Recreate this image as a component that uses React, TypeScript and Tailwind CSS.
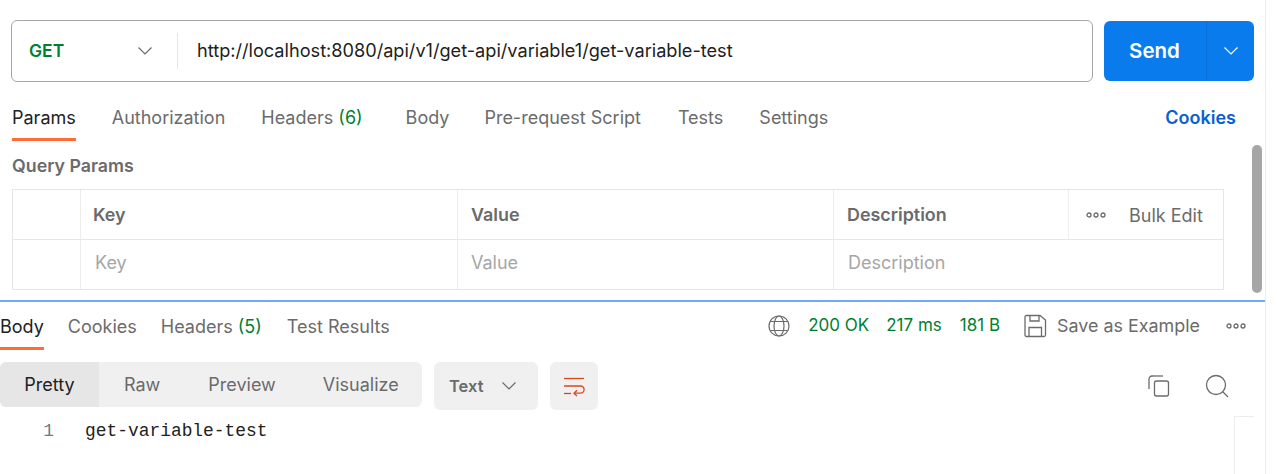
import React from "react";

const Chevron = ({ className = "" }: { className?: string }) => (
  <svg className={className} width="16" height="16" viewBox="0 0 16 16" fill="none" stroke="currentColor" strokeWidth="1.2">
    <path d="M1.5 4.5 L8 11 L14.5 4.5" />
  </svg>
);

const Dots = ({ className = "" }: { className?: string }) => (
  <svg className={className} width="20" height="6" viewBox="0 0 20 6" fill="none" stroke="currentColor" strokeWidth="1.3">
    <circle cx="3" cy="3" r="2" />
    <circle cx="10" cy="3" r="2" />
    <circle cx="17" cy="3" r="2" />
  </svg>
);

const Tab = ({ children, active, className = "" }: { children: React.ReactNode; active?: boolean; className?: string }) => (
  <div className={`flex items-center border-b-[3px] ${active ? "border-[#ff6c37] text-[#212121]" : "border-transparent text-[#6b6b6b]"} ${className}`}>
    {children}
  </div>
);

export default function App() {
  return (
    <div className="w-[1277px] h-[474px] overflow-hidden bg-white flex font-['Inter',sans-serif] text-[18px]">
      <div className="w-[1266px] h-full flex flex-col border-r border-[#ededed]">
        <section className="relative h-[300px] shrink-0 pl-[11px] pr-[12px] pt-[20px]">
          <div className="flex gap-[11px] items-center">
            <div className="w-[1082px] shrink-0 h-[62px] border border-[#a6a6a6] rounded-[6px] flex items-center">
              <div className="w-[166px] h-[36px] flex items-center pl-[17px] border-r border-[#e6e6e6] shrink-0">
                <span className="w-[108px] text-[#007f31] font-semibold text-[17.5px]">GET</span>
                <Chevron className="text-[#6b6b6b]" />
              </div>
              <div className="pl-[19px] text-[#212121] text-[18.15px]">http://localhost:8080/api/v1/get-api/variable1/get-variable-test</div>
            </div>
            <div className="w-[150px] shrink-0 h-[60px] rounded-[6px] bg-[#097bed] flex text-white">
              <div className="w-[103px] pr-px flex items-center justify-center border-r border-[#0a6fd4] font-semibold text-[20.5px]">Send</div>
              <div className="flex-1 flex items-center justify-center"><Chevron /></div>
            </div>
          </div>

          <div className="flex items-stretch pl-px h-[44px] mt-[15px] pr-[17px]">
            <Tab active>Params</Tab>
            <Tab className="ml-[36px]">Authorization</Tab>
            <Tab className="ml-[36px]">Headers&nbsp;<span className="text-[#007f31]">(6)</span></Tab>
            <Tab className="ml-[43px]">Body</Tab>
            <Tab className="ml-[35px]">Pre-request Script</Tab>
            <Tab className="ml-[37px]">Tests</Tab>
            <Tab className="ml-[36px]">Settings</Tab>
            <Tab className="ml-auto !text-[#0b5fd0] font-semibold">Cookies</Tab>
          </div>

          <div className="pl-px mt-[14px] h-[21px] leading-[21px] text-[#6b6b6b] font-semibold text-[17.8px]">Query Params</div>

          <div className="ml-px mt-[13px] w-[1212px] border border-[#e6e6e6]">
            <div className="grid grid-cols-[67px_377px_376px_235px_1fr] h-[50px] border-b border-[#e6e6e6]">
              <div />
              <div className="border-l border-[#ededed] pl-[12px] pt-px flex items-center font-semibold text-[17.9px] text-[#6b6b6b]">Key</div>
              <div className="border-l border-[#ededed] pl-[13px] pt-px flex items-center font-semibold text-[17.9px] text-[#6b6b6b]">Value</div>
              <div className="border-l border-[#ededed] pl-[13px] pt-px flex items-center font-semibold text-[17.9px] text-[#6b6b6b]">Description</div>
              <div className="border-l border-[#ededed] pl-[17px] pt-px flex items-center text-[#6b6b6b]">
                <Dots />
                <span className="ml-[23px]">Bulk Edit</span>
              </div>
            </div>
            <div className="grid grid-cols-[67px_377px_376px_1fr] h-[49px] text-[#a6a6a6]">
              <div />
              <div className="border-l border-[#ededed] pl-[14px] pb-[5px] flex items-center">Key</div>
              <div className="border-l border-[#ededed] pl-[13px] pb-[5px] flex items-center">Value</div>
              <div className="border-l border-[#ededed] pl-[14px] pb-[5px] flex items-center">Description</div>
            </div>
          </div>

          <div className="absolute left-[1252px] top-[145px] w-[10px] h-[148px] rounded-[5px] bg-[#a6a6a6]" />
        </section>

        <div className="h-[2px] bg-[#6eaaf1] shrink-0" />

        <section className="flex-1 relative">
          <div className="flex items-stretch h-[48px]">
            <Tab active className="pt-[3px]">Body</Tab>
            <Tab className="pt-[3px] ml-[24px]">Cookies</Tab>
            <Tab className="pt-[3px] ml-[24px]">Headers&nbsp;<span className="text-[#007f31]">(5)</span></Tab>
            <Tab className="pt-[3px] ml-[25px]">Test Results</Tab>
            <div className="ml-auto flex items-center h-[48px] pr-[19px] text-[#007f31] text-[17px]">
              <svg width="24" height="24" viewBox="0 0 24 24" fill="none" stroke="#6b6b6b" strokeWidth="1.2">
                <circle cx="12" cy="12" r="10" />
                <ellipse cx="12" cy="12" rx="5" ry="10" />
                <path d="M3.2 7.5 H20.8 M3.2 16.5 H20.8" />
              </svg>
              <span className="ml-[17px]">200 OK</span>
              <span className="ml-[17px]">217 ms</span>
              <span className="ml-[18px]">181 B</span>
              <svg className="ml-[24px]" width="23" height="24" viewBox="0 0 23 24" fill="none" stroke="#6b6b6b" strokeWidth="1.3">
                <path d="M1 3 a1.5 1.5 0 0 1 1.5 -1.5 H16 L21.5 6 V21 a1.5 1.5 0 0 1 -1.5 1.5 H2.5 A1.5 1.5 0 0 1 1 21 Z" />
                <path d="M6 1.5 V7 H15 V1.5" />
                <path d="M5 22.5 V13.5 H17.5 V22.5" />
              </svg>
              <span className="ml-[10px] text-[#6b6b6b] text-[17.9px]">Save as Example</span>
              <Dots className="ml-[26px] text-[#6b6b6b]" />
            </div>
          </div>

          <div className="flex items-start mt-[12px]">
            <div className="w-[422px] h-[45px] rounded-[6px] bg-[#f0f0f0] flex text-[#6b6b6b] overflow-hidden">
              <div className="w-[99px] bg-[#e6e6e6] text-[#212121] flex items-center justify-center">Pretty</div>
              <div className="ml-[25px] flex items-center">Raw</div>
              <div className="ml-[48px] flex items-center">Preview</div>
              <div className="ml-[47px] flex items-center">Visualize</div>
            </div>
            <div className="ml-[12px] w-[104px] h-[48px] rounded-[6px] bg-[#f0f0f0] flex items-center pl-[15px] text-[#6b6b6b] font-semibold text-[16.5px]">
              <span className="w-[52px]">Text</span>
              <Chevron />
            </div>
            <div className="ml-[12px] w-[48px] h-[48px] rounded-[6px] bg-[#f0f0f0] flex items-center justify-center">
              <svg width="24" height="24" viewBox="0 0 24 24" fill="none" stroke="#d9481c" strokeWidth="1.3">
                <path d="M2 4.5 H22" />
                <path d="M2 12 H18.5 a3.6 3.6 0 0 1 0 7.2 H12" />
                <path d="M15 16.3 L12 19.2 L15 22" />
                <path d="M2 19.5 H9" />
              </svg>
            </div>
            <div className="ml-auto flex items-center h-[48px] pr-[36px] text-[#6b6b6b]">
              <svg width="24" height="24" viewBox="0 0 24 24" fill="none" stroke="currentColor" strokeWidth="1.3">
                <path d="M6 2 H5 a3 3 0 0 0 -3 3 V15" />
                <rect x="7.5" y="7" width="14" height="15" rx="2" />
                <path d="M6 2 H16" />
              </svg>
              <svg className="ml-[34px]" width="24" height="24" viewBox="0 0 24 24" fill="none" stroke="currentColor" strokeWidth="1.3">
                <circle cx="11" cy="11" r="9.5" />
                <path d="M18 18 L23 23" />
              </svg>
            </div>
          </div>

          <div className="flex mt-[9px] h-[24px] items-center font-['Liberation_Mono',monospace] text-[17.9px]">
            <span className="w-[85px] pr-[31px] text-right text-[#5f7f8f]">1</span>
            <span className="text-[#212121]">get-variable-test</span>
          </div>

          <div className="absolute left-[1234px] top-[114px] w-[20px] h-[60px] border-l border-t border-[#ededed]" />
        </section>
      </div>
    </div>
  );
}
